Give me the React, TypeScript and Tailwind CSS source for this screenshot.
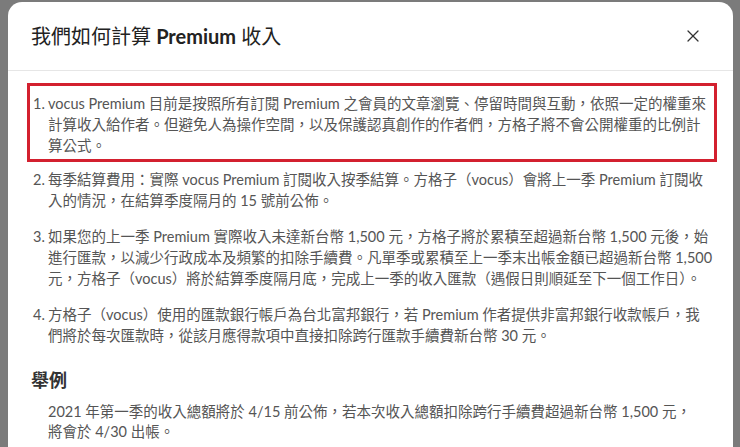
import { X } from "lucide-react";

const font = { fontFamily: 'Lato, "Noto Sans CJK TC", sans-serif' };

const items: { n: number; lines: string[]; boxed?: boolean }[] = [
  {
    n: 1,
    boxed: true,
    lines: [
      "vocus Premium 目前是按照所有訂閱 Premium 之會員的文章瀏覽、停留時間與互動，依照一定的權重來",
      "計算收入給作者。但避免人為操作空間，以及保護認真創作的作者們，方格子將不會公開權重的比例計",
      "算公式。",
    ],
  },
  {
    n: 2,
    lines: [
      "每季結算費用：實際 vocus Premium 訂閱收入按季結算。方格子（vocus）會將上一季 Premium 訂閱收",
      "入的情況，在結算季度隔月的 15 號前公佈。",
    ],
  },
  {
    n: 3,
    lines: [
      "如果您的上一季 Premium 實際收入未達新台幣 1,500 元，方格子將於累積至超過新台幣 1,500 元後，始",
      "進行匯款，以減少行政成本及頻繁的扣除手續費。凡單季或累積至上一季末出帳金額已超過新台幣 1,500",
      "元，方格子（vocus）將於結算季度隔月底，完成上一季的收入匯款（遇假日則順延至下一個工作日）。",
    ],
  },
  {
    n: 4,
    lines: [
      "方格子（vocus）使用的匯款銀行帳戶為台北富邦銀行，若 Premium 作者提供非富邦銀行收款帳戶，我",
      "們將於每次匯款時，從該月應得款項中直接扣除跨行匯款手續費新台幣 30 元。",
    ],
  },
];

function Lines({ lines }: { lines: string[] }) {
  return (
    <div className="whitespace-nowrap">
      {lines.map((l, i) => (
        <div key={i}>{l}</div>
      ))}
    </div>
  );
}

export default function App() {
  return (
    <div className="h-[447px] w-[740px] overflow-hidden bg-[#7b7b7b] pt-[2px] pl-2" style={font}>
      <div className="h-[460px] w-[725px] rounded-t-[14px] bg-white">
        <div className="flex h-[69px] items-center justify-between border-b border-[#e6e6e6] pl-[23px] pr-[30px]">
          <h1 className="text-[20px] text-[#222]">
            我們如何計算 <span className="font-bold">Premium</span> 收入
          </h1>
          <X className="h-[20px] w-[20px] text-[#333]" strokeWidth={1.5} />
        </div>
        <div className="pl-[19px] pr-4 pt-[12px] text-[14.5px] leading-[21px] text-[#555]">
          {items.map((it) => (
            <div
              key={it.n}
              className={
                it.boxed
                  ? "mb-[7px] flex border-[3px] border-[#d3202f] pt-[7px] pb-[3px] pl-[3px]"
                  : "mb-[15px] flex pl-[6px]"
              }
            >
              <span className="w-[15px] shrink-0">{it.n}.</span>
              <Lines lines={it.lines} />
            </div>
          ))}
          <h2 className="mt-[22px] pl-[4px] text-[18px] font-bold leading-[24px] text-[#333]">舉例</h2>
          <div className="mt-[10px] pl-[21px] leading-[20px]">
            <Lines
              lines={[
                "2021 年第一季的收入總額將於 4/15 前公佈，若本次收入總額扣除跨行手續費超過新台幣 1,500 元，",
                "將會於 4/30 出帳。",
              ]}
            />
          </div>
        </div>
      </div>
    </div>
  );
}
